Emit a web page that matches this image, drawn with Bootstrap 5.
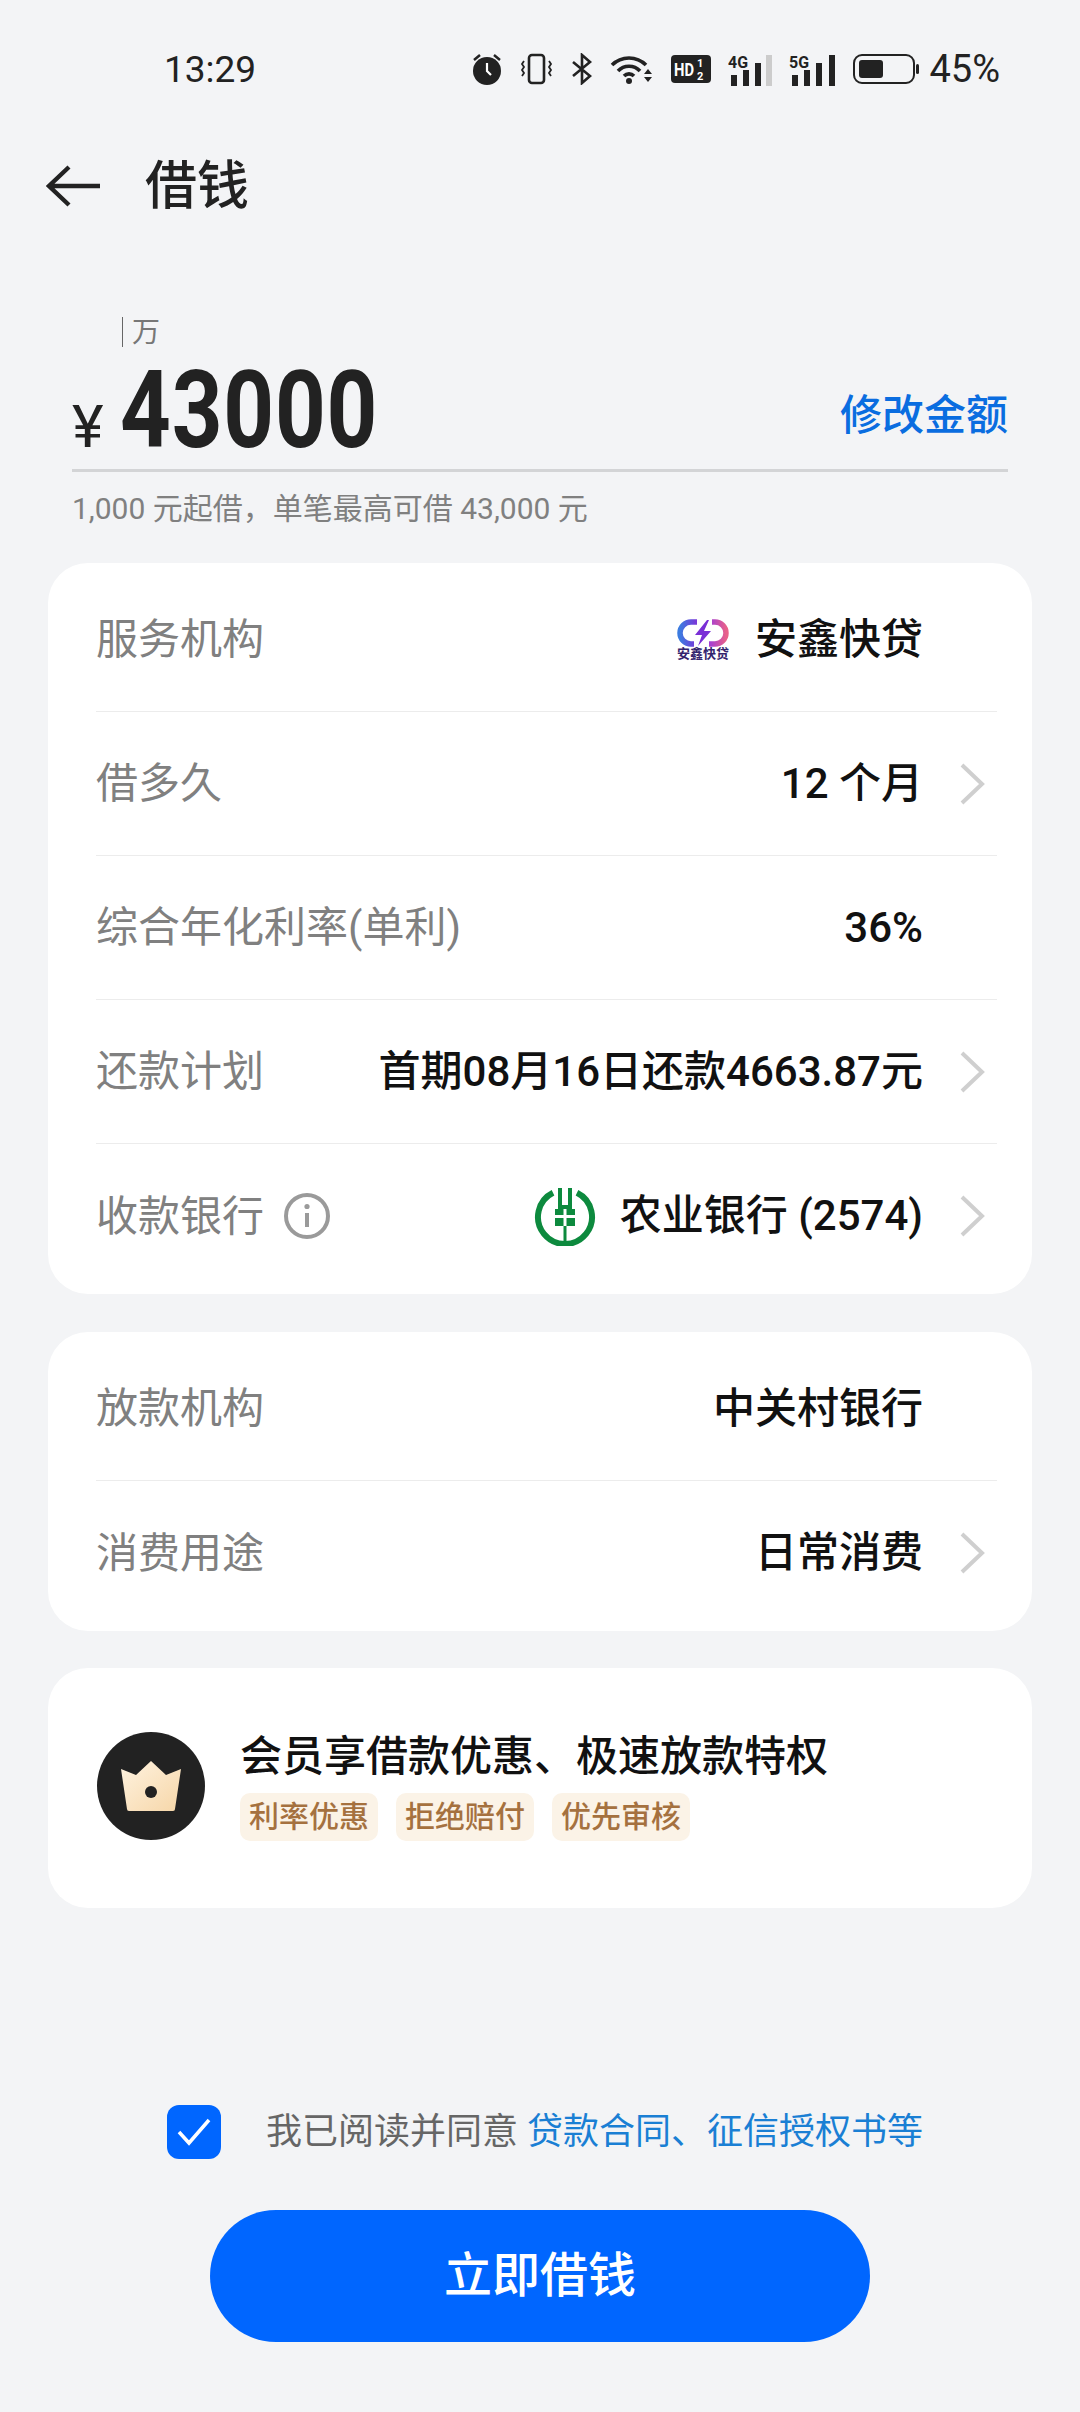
<!DOCTYPE html>
<html lang="zh-CN">
<head>
  <meta charset="UTF-8" />
  <meta name="viewport" content="width=device-width, initial-scale=1.0" />
  <title>借钱</title>
  <link href="https://cdn.jsdelivr.net/npm/bootstrap@5.3.3/dist/css/bootstrap.min.css" rel="stylesheet">
  <style>
    body { background: #f3f4f6; font-family: Roboto, "Noto Sans CJK SC", sans-serif; color: #111; }
    .screen { width: 1080px; height: 2412px; overflow: hidden; }
    .status-bar { height: 138px; padding: 0 80px 0 164px; color: #222; }
    .status-time { font-size: 37px; width: 310px; line-height: 1; }
    .status-pct { font-size: 38px; margin-left: 9px; line-height: 1; }
    .status-icons { gap: 17.2px; }
    .top-head { height: 96px; padding-left: 46px; }
    .top-head h1 { font-size: 52px; font-weight: 500; margin: 2px 0 0 45px; color: #222; }
    .amount-box { padding: 0 72px; }
    .wan-line { height: 40px; margin-top: 79px; padding-left: 50px; font-size: 28px; line-height: 40px; color: #777; }
    .wan-line i { display: inline-block; width: 1px; height: 30px; background: #666; margin-right: 9px; vertical-align: -5px; }
    .amount-row { height: 119px; padding-top: 3px; border-bottom: 3px solid #d3d4d6; }
    .yen { font-size: 60px; width: 50px; color: #222; }
    .amount-num { display: inline-block; font-size: 108px; font-weight: 700; letter-spacing: 1px; color: #222; line-height: 1; transform: scaleX(.82); transform-origin: left center; margin-left: -2px; }
    .edit-link { font-size: 42px; font-weight: 500; color: #0a6de0; text-decoration: none; margin-top: 6px; }
    .hint-line { font-size: 30px; color: #808080; margin-top: 17px; line-height: 40px; height: 40px; }
    .info-card { margin: 0 48px; border: 0; border-radius: 40px; background: #fff; padding: 5px 35px 6px 48px; }
    .first-card { margin-top: 34px; }
    .next-card { margin-top: 38px; }
    .info-row { height: 144px; padding-right: 12px; border-bottom: 1px solid #ececec; font-size: 42px; }
    .info-row:last-child { border-bottom: 0; }
    .row-label { color: #808080; }
    .row-value { font-weight: 500; color: #111; margin-left: auto; line-height: 1; }
    .chev-slot { width: 62px; flex: none; display: flex; justify-content: flex-end; }
    .tip-icon { margin-left: 20px; }
    .vip-card { margin: 37px 48px 0; height: 240px; border: 0; border-radius: 40px; background: #fff; padding-left: 49px; }
    .vip-badge { width: 108px; height: 108px; border-radius: 50%; background: #222; flex: none; margin: 0 35px 4px 0; }
    .vip-title { font-size: 42px; font-weight: 500; line-height: 1; color: #111; margin-bottom: 15px; }
    .perk-row { gap: 18px; }
    .perk-chip { font-size: 30px; line-height: 48px; padding: 0 9px; border-radius: 10px; background: #fbf3e7; color: #a5713f; font-weight: 500; }
    .agree-line { margin-left: 167px; height: 54px; font-size: 36px; color: #666; }
    .tick-box { width: 54px; height: 54px; border-radius: 12px; background: #0066ff; margin-right: 45px; flex: none; }
    .agree-line a { color: #1a7fd4; text-decoration: none; margin-left: 9px; }
    .go-btn { width: 660px; height: 132px; margin: 51px auto 70px; border-radius: 66px; background: #0066ff; border: 0; color: #fff; font-size: 48px; font-weight: 500; display: block; }
    .go-btn:hover { background: #0066ff; color: #fff; }
    .logo-mini { font-size: 13px; line-height: 1; font-weight: 700; color: #33246e; text-align: center; width: 56px; }
  </style>
</head>
<body>
  <div class="screen d-flex flex-column">
    <div class="status-bar d-flex align-items-center">
      <div class="status-time">13:29</div>
      <div class="status-icons d-flex align-items-center">
        <svg width="32" height="32" viewBox="0 0 32 32"><circle cx="16" cy="18" r="14" fill="#222"/><path d="M3 7l6-5M29 7l-6-5" stroke="#222" stroke-width="2.5"/><path d="M16 10v8l4 4" stroke="#fff" stroke-width="2.2" fill="none"/></svg>
        <svg width="33" height="32" viewBox="0 0 33 32" fill="none" stroke="#222"><rect x="9" y="2" width="15" height="28" rx="3" stroke-width="2.6"/><path d="M4 8l-2 3 2 3-2 3 2 3 -2 3M29 8l2 3-2 3 2 3-2 3 2 3" stroke-width="1.8"/></svg>
        <svg width="22" height="32" viewBox="0 0 22 32" fill="none" stroke="#222" stroke-width="2.6"><path d="M2 9l17 14-8 7V2l8 7L2 23"/></svg>
        <svg width="44" height="30" viewBox="0 0 44 30"><g fill="none" stroke="#222" stroke-width="3.6"><path d="M2 11a24 24 0 0 1 34 0"/><path d="M8 17a15 15 0 0 1 22 0"/><path d="M14 22a7 7 0 0 1 10 0"/></g><circle cx="19" cy="27" r="3" fill="#222"/><path d="M34 20l4-5 4 5zM34 23l4 5 4-5z" fill="#222"/></svg>
        <svg width="40" height="30" viewBox="0 0 40 30"><rect y="1" width="40" height="28" rx="4" fill="#222"/><text x="3" y="22" font-size="18" font-weight="700" fill="#fff" textLength="20" lengthAdjust="spacingAndGlyphs">HD</text><text x="26" y="13" font-size="11" font-weight="700" fill="#fff">1</text><text x="26" y="26" font-size="11" font-weight="700" fill="#fff">2</text></svg>
        <svg width="44" height="34" viewBox="0 0 44 34"><text x="0" y="16" font-size="17" font-weight="700" fill="#222" textLength="20" lengthAdjust="spacingAndGlyphs">4G</text><rect x="3" y="23" width="6" height="11" fill="#222"/><rect x="15" y="18" width="6" height="16" fill="#222"/><rect x="27" y="11" width="6" height="23" fill="#222"/><rect x="38" y="3" width="6" height="31" fill="#ccc"/></svg>
        <svg width="47" height="34" viewBox="0 0 47 34"><text x="0" y="16" font-size="17" font-weight="700" fill="#222" textLength="20" lengthAdjust="spacingAndGlyphs">5G</text><rect x="3" y="23" width="6" height="11" fill="#222"/><rect x="15" y="18" width="6" height="16" fill="#222"/><rect x="27" y="11" width="6" height="23" fill="#222"/><rect x="40" y="3" width="6" height="31" fill="#222"/></svg>
        <svg width="67" height="30" viewBox="0 0 67 30"><rect x="1" y="1" width="60" height="28" rx="8" fill="none" stroke="#222" stroke-width="2"/><rect x="6" y="6" width="24" height="18" rx="3" fill="#222"/><rect x="63" y="10" width="3" height="10" rx="1.5" fill="#222"/></svg>
      </div>
      <div class="status-pct">45%</div>
    </div>

    <div class="top-head d-flex align-items-center">
      <svg width="54" height="44" viewBox="0 0 54 44" fill="none" stroke="#222" stroke-width="4.4"><path d="M23 3L3 22l20 19M3 22h51"/></svg>
      <h1>借钱</h1>
    </div>

    <div class="amount-box">
      <div class="wan-line"><i></i>万</div>
      <div class="amount-row d-flex align-items-baseline">
        <span class="yen">¥</span>
        <span class="amount-num">43000</span>
        <a class="edit-link ms-auto align-self-center" href="#">修改金额</a>
      </div>
      <div class="hint-line">1,000 元起借，单笔最高可借 43,000 元</div>
    </div>

    <div class="card info-card first-card">
      <div class="info-row d-flex align-items-center">
        <span class="row-label">服务机构</span>
        <span class="row-value d-flex align-items-center">
          <span class="d-flex flex-column align-items-center me-4">
            <svg width="52" height="28" viewBox="0 0 52 28" fill="none">
              <defs>
                <linearGradient id="lg" x1="0" x2="1"><stop offset="0" stop-color="#3c7be0"/><stop offset="1" stop-color="#7b35d8"/></linearGradient>
                <linearGradient id="rg" x1="0" x2="1"><stop offset="0" stop-color="#a03cd8"/><stop offset="1" stop-color="#e8608a"/></linearGradient>
              </defs>
              <path d="M20 3H14a11 11 0 0 0 0 22h3" stroke="url(#lg)" stroke-width="5.5"/>
              <path d="M32 25h6a11 11 0 0 0 0-22h-3" stroke="url(#rg)" stroke-width="5.500"/>
              <path d="M30 1L18 16h7l-4 11 13-15h-7l5-11z" fill="#7a2fd6"/>
            </svg>
            <span class="logo-mini">安鑫快贷</span>
          </span>
          安鑫快贷
        </span>
        <span class="chev-slot"></span>
      </div>
      <div class="info-row d-flex align-items-center">
        <span class="row-label">借多久</span>
        <span class="row-value">12 个月</span>
        <span class="chev-slot"><svg width="25" height="42" viewBox="0 0 25 42" fill="none" stroke="#cfcfcf" stroke-width="4"><path d="M2 2l20 19L2 40"/></svg></span>
      </div>
      <div class="info-row d-flex align-items-center">
        <span class="row-label">综合年化利率(单利)</span>
        <span class="row-value">36%</span>
        <span class="chev-slot"></span>
      </div>
      <div class="info-row d-flex align-items-center">
        <span class="row-label">还款计划</span>
        <span class="row-value">首期08月16日还款4663.87元</span>
        <span class="chev-slot"><svg width="25" height="42" viewBox="0 0 25 42" fill="none" stroke="#cfcfcf" stroke-width="4"><path d="M2 2l20 19L2 40"/></svg></span>
      </div>
      <div class="info-row d-flex align-items-center">
        <span class="row-label">收款银行</span>
        <svg class="tip-icon" width="46" height="46" viewBox="0 0 46 46" fill="none"><circle cx="23" cy="23" r="21" stroke="#9a9a9a" stroke-width="4"/><circle cx="23" cy="13.5" r="2.6" fill="#9a9a9a"/><path d="M23 20v14" stroke="#9a9a9a" stroke-width="4"/></svg>
        <span class="row-value d-flex align-items-center">
          <svg class="me-4" width="62" height="60" viewBox="9 7 62 60" fill="none">
            <path d="M28 13.800a27 27 0 1 0 24 0" stroke="#0d8a3e" stroke-width="6"/>
            <path d="M33 9h4v17h6V9h4v21H33z" fill="#0d8a3e"/>
            <path d="M30 30h8.500v6H30zM41.500 30H50v6h-8.500zM30 39h8.500v8H30zM41.500 39H50v8h-8.500zM38.500 47h3v18h-3z" fill="#0d8a3e"/>
          </svg>
          农业银行 (2574)
        </span>
        <span class="chev-slot"><svg width="25" height="42" viewBox="0 0 25 42" fill="none" stroke="#cfcfcf" stroke-width="4"><path d="M2 2l20 19L2 40"/></svg></span>
      </div>
    </div>

    <div class="card info-card next-card">
      <div class="info-row d-flex align-items-center">
        <span class="row-label">放款机构</span>
        <span class="row-value">中关村银行</span>
        <span class="chev-slot"></span>
      </div>
      <div class="info-row d-flex align-items-center">
        <span class="row-label">消费用途</span>
        <span class="row-value">日常消费</span>
        <span class="chev-slot"><svg width="25" height="42" viewBox="0 0 25 42" fill="none" stroke="#cfcfcf" stroke-width="4"><path d="M2 2l20 19L2 40"/></svg></span>
      </div>
    </div>

    <div class="card vip-card flex-row align-items-center">
      <div class="vip-badge d-flex align-items-center justify-content-center">
        <svg width="60" height="50" viewBox="0 0 60 50">
          <defs><linearGradient id="cg" x1="0" y1="0" x2="1" y2="1"><stop offset="0" stop-color="#fff3e0"/><stop offset="1" stop-color="#f6d6a8"/></linearGradient></defs>
          <path d="M0 8l15 6L30 0l15 14 15-6-6 40a2 2 0 0 1-2 2H8a2 2 0 0 1-2-2z" fill="url(#cg)"/>
          <circle cx="30" cy="31" r="6" fill="#222"/>
        </svg>
      </div>
      <div>
        <div class="vip-title">会员享借款优惠、极速放款特权</div>
        <div class="d-flex perk-row">
          <span class="perk-chip">利率优惠</span>
          <span class="perk-chip">拒绝赔付</span>
          <span class="perk-chip">优先审核</span>
        </div>
      </div>
    </div>

    <div class="mt-auto">
      <div class="agree-line d-flex align-items-center">
        <span class="tick-box d-flex align-items-center justify-content-center">
          <svg width="34" height="28" viewBox="0 0 34 28" fill="none" stroke="#fff" stroke-width="3.5"><path d="M2 14l10 11L32 2"/></svg>
        </span>
        <span>我已阅读并同意<a href="#">贷款合同、征信授权书等</a></span>
      </div>
      <button class="btn go-btn" type="button">立即借钱</button>
    </div>
  </div>
</body>
</html>
